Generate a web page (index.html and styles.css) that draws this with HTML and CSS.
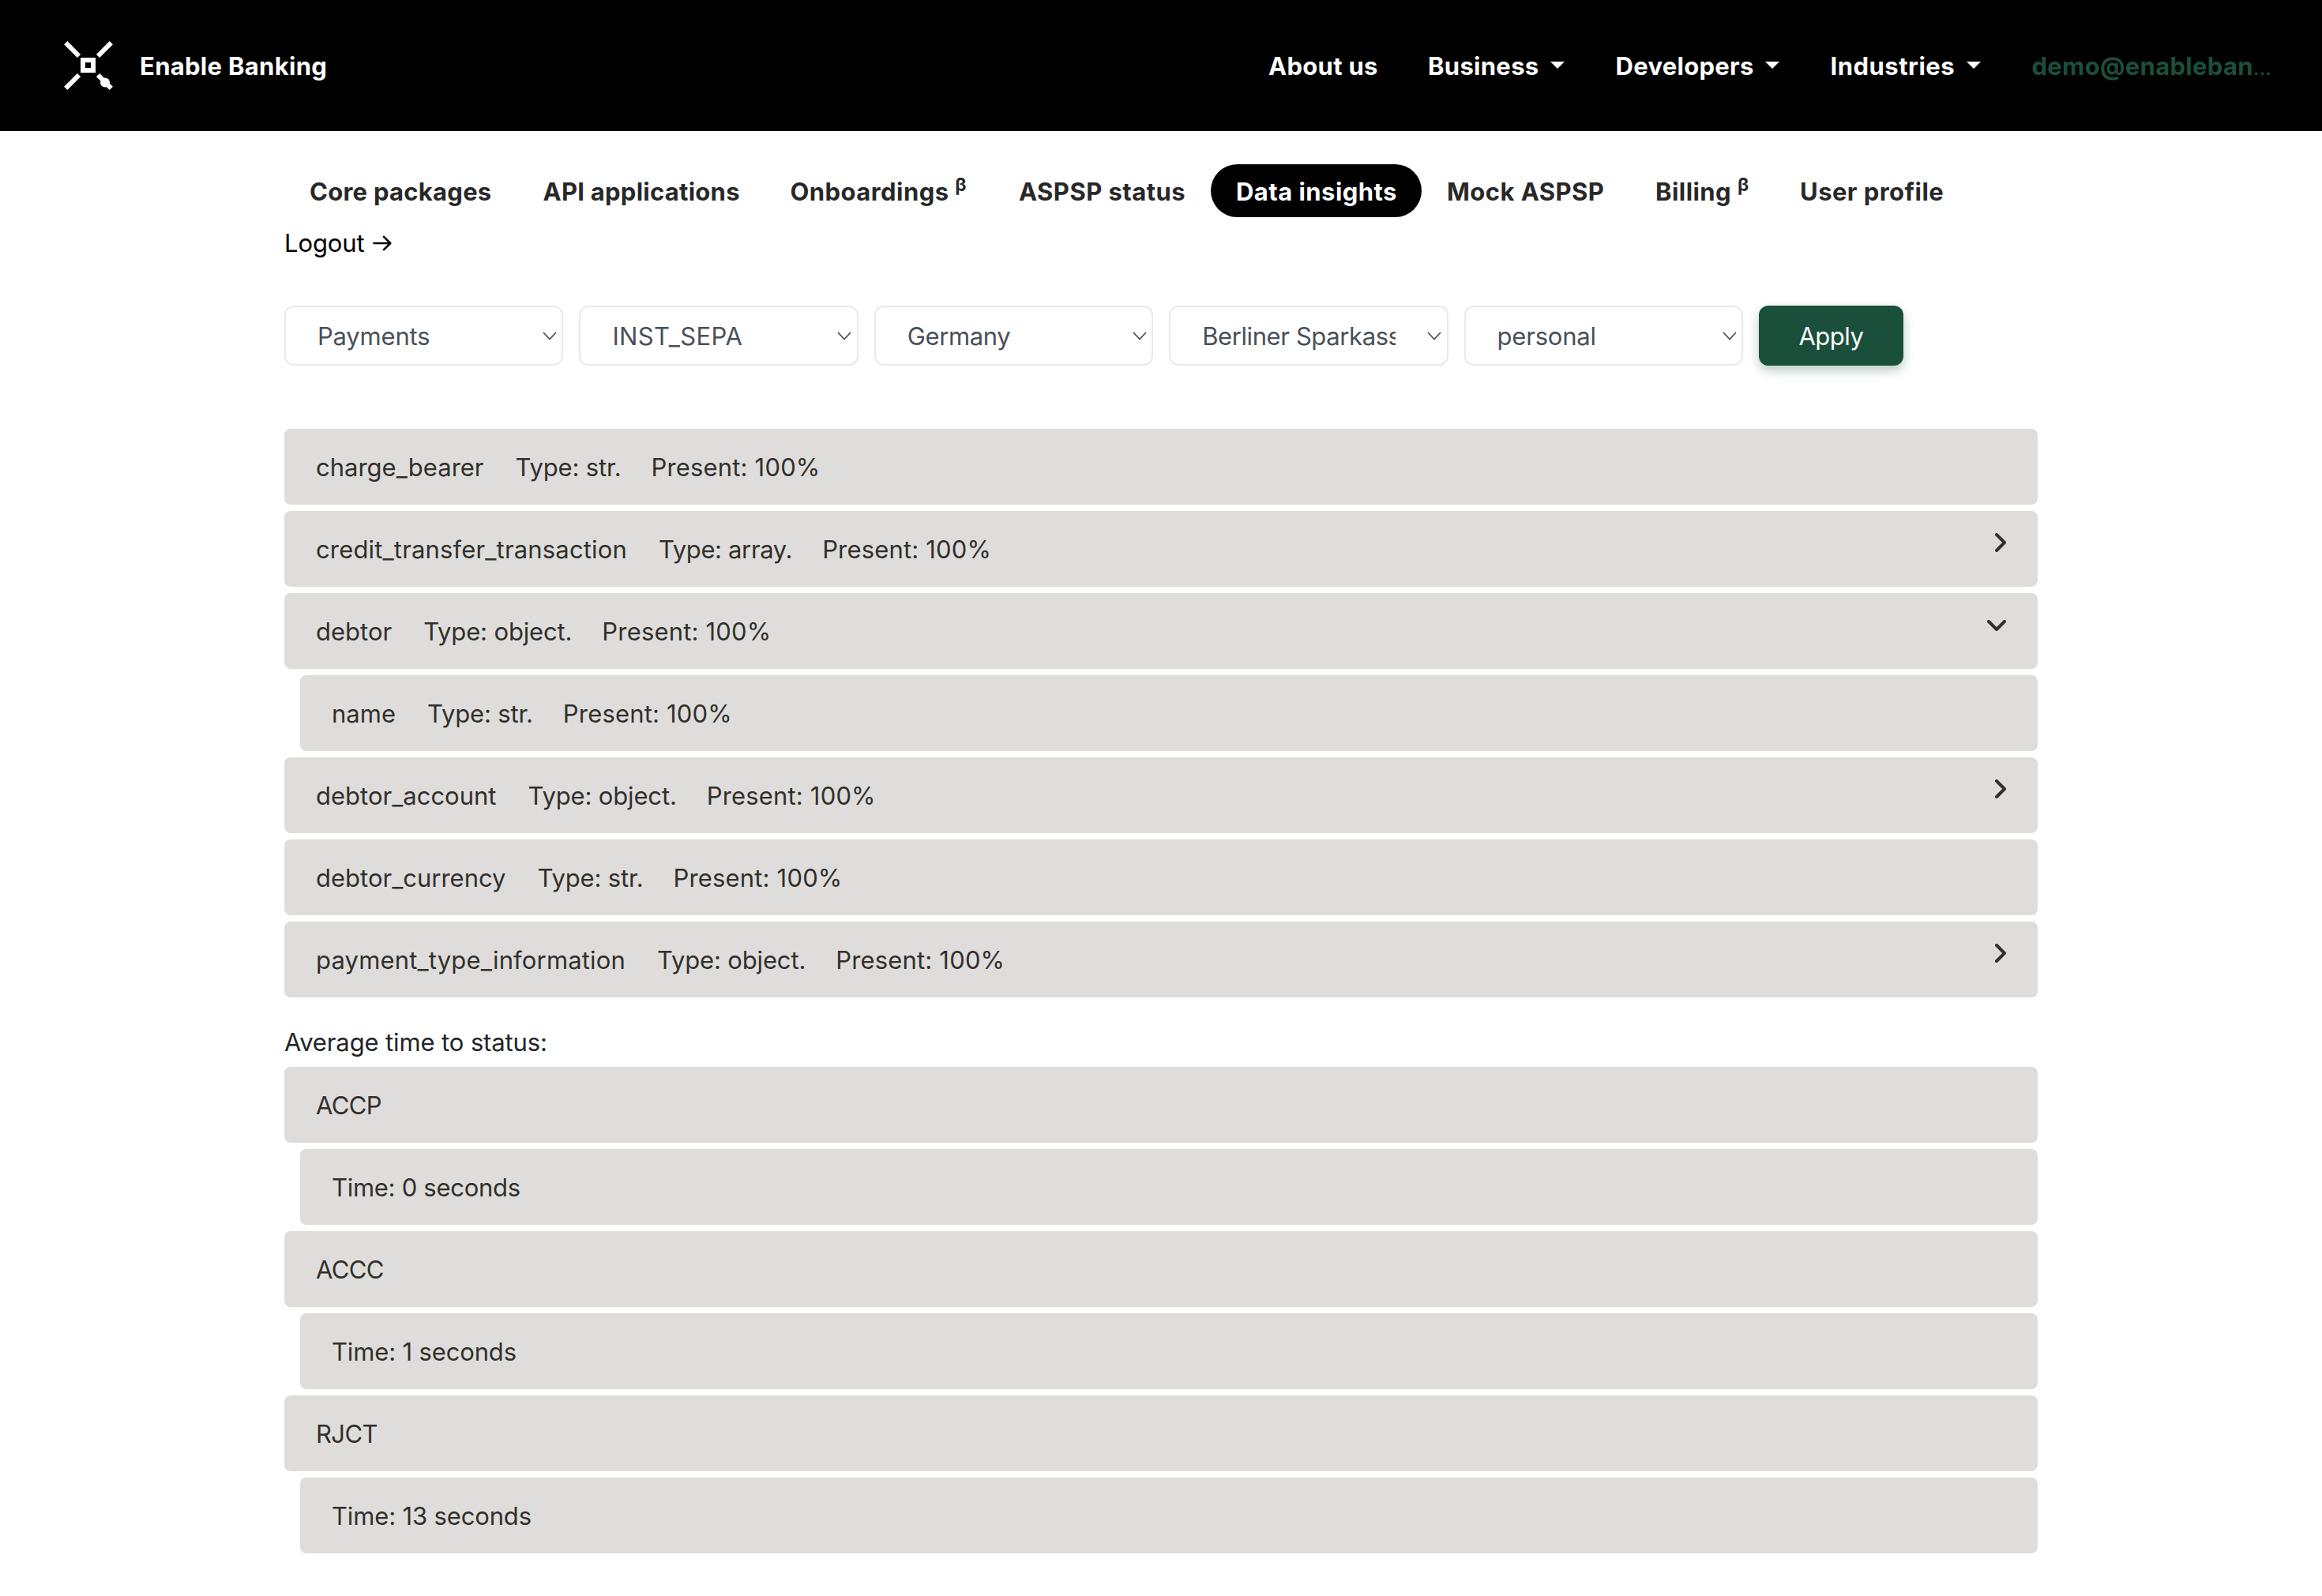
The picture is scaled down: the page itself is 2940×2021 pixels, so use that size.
FILE: index.html
```html
<!DOCTYPE html>
<html lang="en">
<head>
<meta charset="utf-8">
<title>Enable Banking</title>
<link rel="stylesheet" href="styles.css">
</head>
<body>
<header class="topbar">
  <a class="brand">
    <svg class="logo" viewBox="0 0 64 64" width="64" height="64" fill="none" stroke="#fff" stroke-width="6">
      <path d="M3.200 3.200 20 20M60.800 3.200 44 20M3.200 60.800 20 44M44 44 60.800 60.800"/>
      <rect x="25" y="25.100" width="13" height="13"/>
      <circle cx="53" cy="53.500" r="6" fill="#fff" stroke="none"/>
    </svg>
    <span>Enable Banking</span>
  </a>
  <nav class="mainnav">
    <a>About us</a>
    <a class="dropdown">Business</a>
    <a class="dropdown">Developers</a>
    <a class="dropdown industries">Industries</a>
    <a class="account">demo@enableban<span class="dots">…</span></a>
  </nav>
</header>
<main class="container">
  <nav class="subnav">
    <a class="core">Core packages</a>
    <a class="api">API applications</a>
    <a>Onboardings <sup>β</sup></a>
    <a>ASPSP status</a>
    <a class="active">Data insights</a>
    <a>Mock ASPSP</a>
    <a>Billing <sup>β</sup></a>
    <a>User profile</a>
  </nav>
  <a class="logout">Logout
    <svg viewBox="0 0 24 20" width="24" height="20" fill="none" stroke="#000" stroke-width="2.6" stroke-linecap="round" stroke-linejoin="round"><path d="M1.500 10H22M14 1.800 22.200 10 14 18.200"/></svg>
  </a>
  <form class="filters">
    <div class="select"><span>Payments</span><svg viewBox="0 0 18 12"><path d="M1.500 1.500 9 9.500 16.500 1.500"/></svg></div>
    <div class="select code"><span>INST_SEPA</span><svg viewBox="0 0 18 12"><path d="M1.500 1.500 9 9.500 16.500 1.500"/></svg></div>
    <div class="select country"><span>Germany</span><svg viewBox="0 0 18 12"><path d="M1.500 1.500 9 9.500 16.500 1.500"/></svg></div>
    <div class="select bank"><span>Berliner Sparkasse</span><svg viewBox="0 0 18 12"><path d="M1.500 1.500 9 9.500 16.500 1.500"/></svg></div>
    <div class="select"><span>personal</span><svg viewBox="0 0 18 12"><path d="M1.500 1.500 9 9.500 16.500 1.500"/></svg></div>
    <button class="apply" type="button">Apply</button>
  </form>
  <section class="rows">
    <div class="row"><span class="name">charge_bearer</span><span class="type">Type: str.</span><span class="present">Present: 100%</span></div>
    <div class="row"><span class="name long">credit_transfer_transaction</span><span class="type array">Type: array.</span><span class="present">Present: 100%</span><svg class="chevron" viewBox="0 0 14 24" width="14" height="24"><path d="M2 2 12 12 2 22"/></svg></div>
    <div class="row"><span class="name">debtor</span><span class="type">Type: object.</span><span class="present">Present: 100%</span><svg class="chevron open" viewBox="0 0 24 14" width="24" height="14"><path d="M2 2 12 12 22 2"/></svg></div>
    <div class="row child"><span class="name">name</span><span class="type">Type: str.</span><span class="present">Present: 100%</span></div>
    <div class="row"><span class="name">debtor_account</span><span class="type">Type: object.</span><span class="present">Present: 100%</span><svg class="chevron" viewBox="0 0 14 24" width="14" height="24"><path d="M2 2 12 12 2 22"/></svg></div>
    <div class="row"><span class="name">debtor_currency</span><span class="type">Type: str.</span><span class="present">Present: 100%</span></div>
    <div class="row"><span class="name long">payment_type_information</span><span class="type">Type: object.</span><span class="present">Present: 100%</span><svg class="chevron" viewBox="0 0 14 24" width="14" height="24"><path d="M2 2 12 12 2 22"/></svg></div>
  </section>
  <p class="caption">Average time to status:</p>
  <section class="rows">
    <div class="row"><span class="status">ACCP</span></div>
    <div class="row child"><span class="time zero">Time: 0 seconds</span></div>
    <div class="row"><span class="status">ACCC</span></div>
    <div class="row child"><span class="time">Time: 1 seconds</span></div>
    <div class="row"><span class="status">RJCT</span></div>
    <div class="row child"><span class="time">Time: 13 seconds</span></div>
  </section>
</main>
</body>
</html>
```
FILE: styles.css
```css
* { box-sizing: border-box; }
body {
  margin: 0;
  background: #fff;
  color: #212529;
  font: 400 31px/48px Inter, "Liberation Sans", sans-serif;
  letter-spacing: -0.12px;
}
.topbar {
  display: flex;
  justify-content: space-between;
  align-items: center;
  height: 166px;
  padding: 0 64px 0 80px;
  background: #000;
  color: #fff;
  font-weight: 650;
  letter-spacing: 0.3px;
}
.brand { display: flex; align-items: center; gap: 33px; }
.logo { display: block; }
.mainnav {
  display: grid;
  grid-template-columns: 202px 237.500px 272px 255px 303.500px;
}
.brand span { padding-top: 2px; white-space: nowrap; }
.mainnav a { padding-top: 4px; white-space: nowrap; }
.dropdown::after {
  content: "";
  display: inline-block;
  margin-left: 14.500px;
  vertical-align: 8px;
  border: 9.600px solid transparent;
  border-top-color: #fff;
  border-bottom: 0;
}
.industries { letter-spacing: 0.5px; }
.account { color: #1b4f3b; }
.dots { font-size: 27px; font-weight: 400; letter-spacing: 0; }
.container { width: 2220px; margin: 0 auto; padding-top: 42px; }
.subnav {
  display: grid;
  grid-template-columns: 295.500px 313px 289.500px 275px 267px 264px 183px auto;
  justify-content: start;
  color: #282828;
  font-weight: 650;
  letter-spacing: 0.45px;
}
.subnav a { height: 67px; padding: 11px 32px 8px; white-space: nowrap; }
.subnav .active { border-radius: 34px; background: #000; color: #fff; }
.core, .api { letter-spacing: 0.26px; }
.subnav sup { font-size: 23.500px; line-height: 0; vertical-align: 12px; }
.logout {
  display: flex;
  align-items: center;
  gap: 11px;
  margin-top: 9px;
  color: #000;
}
.filters { display: flex; gap: 20px; margin-top: 55px; }
.select {
  display: flex;
  align-items: center;
  width: 353.400px;
  height: 76px;
  padding-left: 40px;
  border: 2px solid #e9e9e9;
  border-radius: 12px;
  color: #495057;
  letter-spacing: -0.2px;
}
.select span { width: 245px; padding-top: 2px; overflow: hidden; white-space: nowrap; }
.select svg {
  width: 18px;
  height: 12px;
  margin: 2px 0 0 40px;
  fill: none;
  stroke: #495057;
  stroke-width: 1.800;
  stroke-linecap: round;
}
.code { letter-spacing: 0.38px; }
.country { letter-spacing: -0.4px; }
.bank { letter-spacing: -0.4px; }
.apply {
  width: 183px;
  height: 76px;
  padding: 2px 0 0;
  border: 0;
  border-radius: 12px;
  background: #1a503b;
  box-shadow: 0 6px 14px rgba(26, 80, 59, 0.3);
  color: #fff;
  font: inherit;
  letter-spacing: -0.5px;
}
.rows { display: grid; gap: 8px; }
.filters + .rows { margin-top: 80px; }
.row {
  display: flex;
  height: 96px;
  padding: 25px 40px 0;
  border-radius: 8px;
  background: #dedddb;
  color: #31302b;
}
.child { margin-left: 20px; }
.name { margin-right: 40px; letter-spacing: 0; }
.long { letter-spacing: 0.16px; }
.type { margin-right: 38px; letter-spacing: -0.15px; }
.array { letter-spacing: -0.35px; }
.present { letter-spacing: 0.18px; }
.status { letter-spacing: -0.6px; }
.time { letter-spacing: -0.15px; }
.zero { letter-spacing: -0.29px; }
.chevron {
  margin: 3px 0 0 auto;
  fill: none;
  stroke: #31302b;
  stroke-width: 4;
  stroke-linecap: round;
  stroke-linejoin: round;
}
.open { margin-top: 9px; }
.caption { margin: 33px 0 7px; }
```
